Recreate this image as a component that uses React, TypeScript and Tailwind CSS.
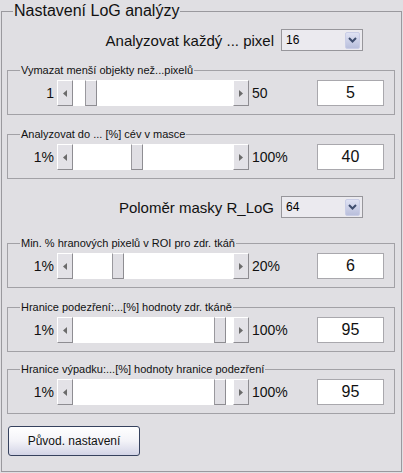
import React from "react";

const font = "font-[family-name:'Liberation_Sans',Arial,sans-serif] font-normal";

type SliderGroupProps = {
  title: string;
  min: number;
  max: number;
  value: number;
  minLabel: string;
  maxLabel: string;
  className?: string;
};

const ArrowButton: React.FC<{ dir: "left" | "right" }> = ({ dir }) => (
  <div className="flex h-full w-[16px] items-center justify-center border-t border-l border-t-white border-l-white border-r border-b border-r-[#8e8d92] border-b-[#8e8d92] bg-[#e3e2e7]">
    <svg width="4" height="7" viewBox="0 0 4 7">
      {dir === "left" ? (
        <path d="M4 0 L0 3.5 L4 7 Z" fill="#6b6b6b" />
      ) : (
        <path d="M0 0 L4 3.5 L0 7 Z" fill="#6b6b6b" />
      )}
    </svg>
  </div>
);

const Slider: React.FC<{ min: number; max: number; value: number }> = ({ min, max, value }) => {
  // trough is 160px, thumb 12px
  const left = Math.round(((value - min) / (max - min)) * 148);
  return (
    <div className="flex h-[26px] w-[192px]">
      <ArrowButton dir="left" />
      <div className="relative flex-1 bg-white">
        <div
          className="absolute top-0 bottom-0 w-[12px] border-t border-l border-t-white border-l-[#9a999e] border-r border-b border-r-[#8e8d92] border-b-[#8e8d92] bg-[#e0dfe4]"
          style={{ left }}
        />
      </div>
      <ArrowButton dir="right" />
    </div>
  );
};

const SliderGroup: React.FC<SliderGroupProps> = ({ title, min, max, value, minLabel, maxLabel, className = "mt-[12px]" }) => (
  <fieldset className={`${className} border border-[#a2a1a6] pt-[3px] pb-[8px]`}>
    <legend className="ml-[12px] px-[1px] text-[11px] leading-[14px] text-[#111]">{title}</legend>
    <div className="flex h-[26px] items-center">
      <div className="w-[46px] text-right text-[14px] leading-none text-[#111]">{minLabel}</div>
      <div className="ml-[3px]">
        <Slider min={min} max={max} value={value} />
      </div>
      <div className="ml-[3px] text-[14px] leading-none text-[#111]">{maxLabel}</div>
      <div className="ml-auto mr-[10px] flex h-[26px] w-[67px] items-center justify-center border border-[#a9a8ad] bg-white text-[16px] text-[#111]">
        {value}
      </div>
    </div>
  </fieldset>
);

const Dropdown: React.FC<{ value: string }> = ({ value }) => (
  <div className="flex h-[22px] w-[82px] items-center border border-[#97969b] bg-[#ebeaef]">
    <span className="ml-[4px] flex-1 text-[12px] leading-none text-black">{value}</span>
    <div className="mr-[2px] flex h-[17px] w-[15px] items-center justify-center rounded-[2px] border border-[#c9cde6] bg-gradient-to-b from-[#dfe2f3] to-[#b9bfdc]">
      <svg width="9" height="6" viewBox="0 0 9 6">
        <path d="M1 1 L4.5 4.5 L8 1" stroke="#3e4d6e" strokeWidth="2" fill="none" />
      </svg>
    </div>
  </div>
);

const SelectRow: React.FC<{ label: string; value: string; className: string }> = ({ label, value, className }) => (
  <div className={`flex items-center justify-end ${className}`}>
    <span className="mr-[7px] text-[15px] leading-none text-[#111]">{label}</span>
    <div className="mr-[32px]">
      <Dropdown value={value} />
    </div>
  </div>
);

export default function App() {
  return (
    <div className={`h-[473px] w-[403px] overflow-hidden bg-[#e0dfe3] ${font}`}>
      <fieldset className="mt-[1px] ml-[1px] h-[471px] w-[401px] border border-[#9a999e] pl-[5px] pr-[6px]">
        <legend className="ml-[6px] px-[1px] text-[16px] leading-[20px] text-[#111]">Nastavení LoG analýzy</legend>

        <SelectRow label="Analyzovat každý ... pixel" value="16" className="mt-[8px]" />

        <SliderGroup
          title="Vymazat menší objekty než...pixelů"
          min={1}
          max={50}
          value={5}
          minLabel="1"
          maxLabel="50"
        />
        <SliderGroup
          title="Analyzovat do ... [%] cév v masce"
          min={1}
          max={100}
          value={40}
          minLabel="1%"
          maxLabel="100%"
        />

        <SelectRow label="Poloměr masky R_LoG" value="64" className="mt-[17px]" />

        <SliderGroup
          title="Min. % hranových pixelů v ROI pro zdr. tkáň"
          min={1}
          max={20}
          value={6}
          minLabel="1%"
          maxLabel="20%"
          className="mt-[18px]"
        />
        <SliderGroup
          title="Hranice podezření:...[%] hodnoty zdr. tkáně"
          min={1}
          max={100}
          value={95}
          minLabel="1%"
          maxLabel="100%"
        />
        <SliderGroup
          title="Hranice výpadku:...[%] hodnoty hranice podezření"
          min={1}
          max={100}
          value={95}
          minLabel="1%"
          maxLabel="100%"
          className="mt-[10px]"
        />

        <button className="mt-[12px] ml-[1px] h-[30px] w-[132px] rounded-[3px] border border-[#36425e] bg-gradient-to-b from-white via-[#f3f3f8] to-[#d3d4e6] text-[12px] text-[#111]">
          Původ. nastavení
        </button>
      </fieldset>
    </div>
  );
}
